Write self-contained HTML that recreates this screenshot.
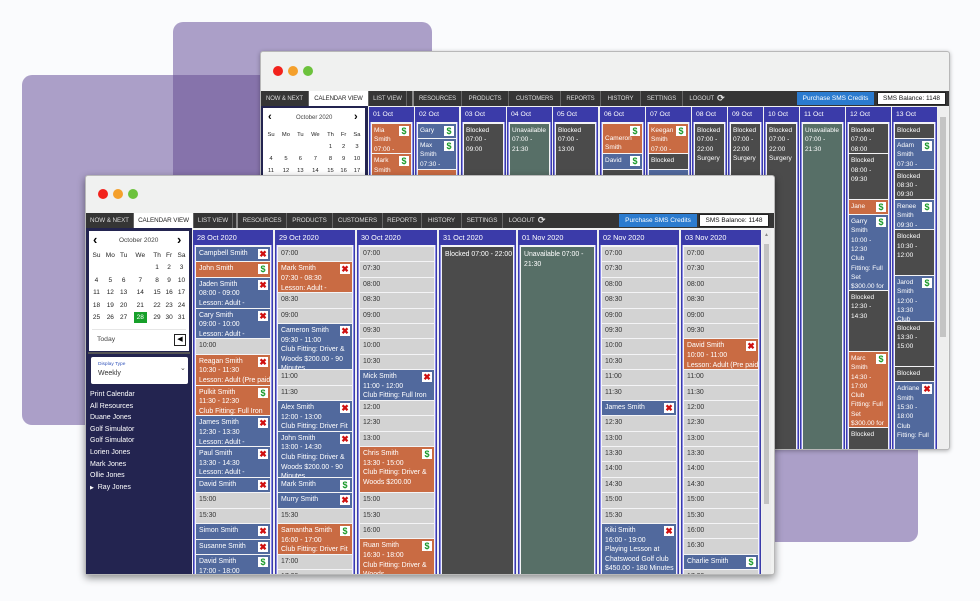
<!DOCTYPE html>
<html><head><meta charset="utf-8">
<style>
*{box-sizing:border-box;margin:0;padding:0}
body{width:980px;height:601px;overflow:hidden;background:#fafbfd;position:relative;font-family:"Liberation Sans",Arial,sans-serif}
.a{position:absolute}
.pr{position:absolute;background:#ab9fc8;border-radius:10px}
.win{position:absolute;background:#f0f1f0;border:1px solid #b8b8b8;border-radius:3px;overflow:hidden}
.dot{position:absolute;width:10px;height:10px;border-radius:50%}
.nav{position:absolute;background:#353535;display:flex;align-items:center;font-size:6px;color:#ddd;letter-spacing:-0.1px}
.nav span{height:100%;display:flex;align-items:center;justify-content:center;border-right:1px solid #666;flex-shrink:0}
.nav .on{background:#fff;color:#222}
.buy{position:absolute;background:#2b7bcf;color:#fff;font-size:6.5px;display:flex;align-items:center;justify-content:center}
.bal{position:absolute;background:#fff;color:#111;font-size:6.5px;display:flex;align-items:center;justify-content:center;border:1px solid #222}
.col{position:absolute;background:#3b3ba9}
.col .hd{position:absolute;left:0;top:0;height:15px;color:#fff;font-size:7.3px;line-height:15px;padding-left:4px;white-space:nowrap}
.col .bd{position:absolute;left:1px;right:1px;top:15px;bottom:0;border-left:1px solid #8a8ae6;border-right:1px solid #8a8ae6;background:#f4f4f6;padding:2px 1px;display:flex;flex-direction:column;gap:1px;overflow:hidden}
.e{position:relative;flex-shrink:0;color:#fff;font-size:6.9px;line-height:9.6px;padding:2px 3px;overflow:hidden;white-space:nowrap}
.b{background:#51699d}.o{background:#c96b43}.g{background:#d3d3d3;color:#333;line-height:10.4px}.k{background:#4b4b4b}.n{background:#576f67}
.i{position:absolute;right:2px;top:2px;width:10px;height:10px;background:#fff;font-weight:bold;font-size:9px;line-height:10px;text-align:center}
.x{color:#d01010}.s{color:#1a9a2a}
.h1{height:14.4px}.h2{height:29.8px}.h3{height:45.2px}.h4{height:60.6px}.h5{height:76px}
.bk .e{font-size:6.5px;line-height:9.3px;padding:2px 2px;white-space:normal}
.bk .h1{height:14.2px}.bk .h2{height:29.4px}.bk .h3{height:44.6px}.bk .h4{height:59.8px}.bk .h5{height:75px}
.bk .hd{font-size:6.8px}
table{border-collapse:collapse}
td{text-align:center;padding:0;color:#222}
</style></head><body>

<div class="pr" style="left:173px;top:22px;width:259px;height:320px"></div>
<div class="pr" style="left:22px;top:75px;width:400px;height:350px"></div>
<div class="a" style="left:173px;top:75px;width:249px;height:267px;background:#8673ab"></div>
<div class="pr" style="left:600px;top:300px;width:318px;height:242px"></div>

<!-- BACK WINDOW -->
<div class="win" style="left:260px;top:51px;width:690px;height:399px;box-shadow:0 1px 4px rgba(0,0,0,.3)"></div>
<div class="dot" style="left:273px;top:66px;background:#f2221c"></div>
<div class="dot" style="left:288px;top:66px;background:#f4a02c"></div>
<div class="dot" style="left:303px;top:66px;background:#6cc23c"></div>
<div class="nav" style="left:261px;top:91px;width:688px;height:15px">
<span style="width:48px">NOW &amp; NEXT</span><span class="on" style="width:60px">CALENDAR VIEW</span><span style="width:38px">LIST VIEW</span><span style="width:7px;border-right:2px solid #888"></span><span style="width:48px">RESOURCES</span><span style="width:47px">PRODUCTS</span><span style="width:52px">CUSTOMERS</span><span style="width:40px">REPORTS</span><span style="width:40px">HISTORY</span><span style="width:42px">SETTINGS</span><span style="width:48px;border:none">LOGOUT &nbsp;<b style="font-size:9px">⟳</b></span>
</div>
<div class="buy" style="left:797px;top:92px;width:77px;height:13px">Purchase SMS Credits</div>
<div class="bal" style="left:877px;top:92px;width:69px;height:13px">SMS Balance: 1148</div>
<div class="a" style="left:261px;top:106px;width:107px;height:343px;background:#232450"></div>
<div class="a" style="left:263px;top:108px;width:102px;height:100px;background:#fff"></div>
<div class="a" style="left:268px;top:111px;font-size:11px;font-weight:bold">‹</div>
<div class="a" style="left:354px;top:111px;font-size:11px;font-weight:bold">›</div>
<div class="a" style="left:296px;top:115px;font-size:6px;color:#444">October 2020</div>
<table class="a" style="left:264px;top:129px;width:100px;font-size:5.8px">
<tr style="height:12px;color:#666"><td>Su</td><td>Mo</td><td>Tu</td><td>We</td><td>Th</td><td>Fr</td><td>Sa</td></tr>
<tr style="height:12px"><td></td><td></td><td></td><td></td><td>1</td><td>2</td><td>3</td></tr>
<tr style="height:12px"><td>4</td><td>5</td><td>6</td><td>7</td><td>8</td><td>9</td><td>10</td></tr>
<tr style="height:12px"><td>11</td><td>12</td><td>13</td><td>14</td><td>15</td><td>16</td><td>17</td></tr>
</table>

<div class="bk">
<div class="col" style="left:369px;top:107px;width:45px;height:342px"><div class="hd">01 Oct</div><div class="bd">
<div class="e o h2">Mia<br>Smith<br>07:00 -<div class="i s">$</div></div><div class="e o h2">Mark<br>Smith<div class="i s">$</div></div><div class="e o h2"></div></div></div>
<div class="col" style="left:415px;top:107px;width:44px;height:342px"><div class="hd">02 Oct</div><div class="bd">
<div class="e b h1">Gary<div class="i s">$</div></div><div class="e b h2">Max<br>Smith<br>07:30 -<div class="i s">$</div></div><div class="e o h2"></div></div></div>
<div class="col" style="left:461px;top:107px;width:45px;height:342px"><div class="hd">03 Oct</div><div class="bd">
<div class="e k h4">Blocked<br>07:00 -<br>09:00</div></div></div>
<div class="col" style="left:507px;top:107px;width:45px;height:342px"><div class="hd">04 Oct</div><div class="bd">
<div class="e n" style="height:330px">Unavailable<br>07:00 -<br>21:30</div></div></div>
<div class="col" style="left:553px;top:107px;width:45px;height:342px"><div class="hd">05 Oct</div><div class="bd">
<div class="e k" style="height:180px">Blocked<br>07:00 -<br>13:00</div></div></div>
<div class="col" style="left:600px;top:107px;width:45px;height:342px"><div class="hd">06 Oct</div><div class="bd">
<div class="e o h2" style="padding-top:10px">Cameron<br>Smith<div class="i s">$</div></div><div class="e b h1">David<div class="i s">$</div></div><div class="e k h3"></div></div></div>
<div class="col" style="left:646px;top:107px;width:45px;height:342px"><div class="hd">07 Oct</div><div class="bd">
<div class="e o h2">Keegan<br>Smith<br>07:00 -<div class="i s">$</div></div><div class="e k h1">Blocked</div><div class="e b h3"></div></div></div>
<div class="col" style="left:692px;top:107px;width:35px;height:342px"><div class="hd">08 Oct</div><div class="bd">
<div class="e k" style="height:330px">Blocked<br>07:00 -<br>22:00<br>Surgery</div></div></div>
<div class="col" style="left:728px;top:107px;width:35px;height:342px"><div class="hd">09 Oct</div><div class="bd">
<div class="e k" style="height:330px">Blocked<br>07:00 -<br>22:00<br>Surgery</div></div></div>
<div class="col" style="left:764px;top:107px;width:35px;height:342px"><div class="hd">10 Oct</div><div class="bd">
<div class="e k" style="height:330px">Blocked<br>07:00 -<br>22:00<br>Surgery</div></div></div>
<div class="col" style="left:800px;top:107px;width:45px;height:342px"><div class="hd">11 Oct</div><div class="bd">
<div class="e n" style="height:330px">Unavailable<br>07:00 -<br>21:30</div></div></div>
<div class="col" style="left:846px;top:107px;width:45px;height:342px"><div class="hd">12 Oct</div><div class="bd">
<div class="e k h2">Blocked<br>07:00 -<br>08:00</div><div class="e k h3">Blocked<br>08:00 -<br>09:30</div><div class="e o h1">Jane<div class="i s">$</div></div><div class="e b h5">Garry<br>Smith<br>10:00 -<br>12:30<br>Club<br>Fitting: Full<br>Set<br>$300.00 for<div class="i s">$</div></div><div class="e k h4">Blocked<br>12:30 -<br>14:30</div><div class="e o h5">Marc<br>Smith<br>14:30 -<br>17:00<br>Club<br>Fitting: Full<br>Set<br>$300.00 for<div class="i s">$</div></div><div class="e k h2">Blocked</div></div></div>
<div class="col" style="left:892px;top:107px;width:45px;height:342px"><div class="hd">13 Oct</div><div class="bd">
<div class="e k h1">Blocked</div><div class="e b h2">Adam<br>Smith<br>07:30 -<div class="i s">$</div></div><div class="e k h2">Blocked<br>08:30 -<br>09:30</div><div class="e b h2">Renee<br>Smith<br>09:30 -<div class="i s">$</div></div><div class="e k h3">Blocked<br>10:30 -<br>12:00</div><div class="e b h3">Jarod<br>Smith<br>12:00 -<br>13:30<br>Club<div class="i s">$</div></div><div class="e k h3">Blocked<br>13:30 -<br>15:00</div><div class="e k h1">Blocked</div><div class="e b h5">Adriane<br>Smith<br>15:30 -<br>18:00<br>Club<br>Fitting: Full<div class="i x">✖</div></div></div></div>
</div>
<div class="a" style="left:938px;top:107px;width:10px;height:342px;background:#eee"></div>
<div class="a" style="left:940px;top:117px;width:6px;height:220px;background:#c4c4c4"></div>

<!-- FRONT WINDOW -->
<div class="win" style="left:85px;top:175px;width:690px;height:400px;box-shadow:0 3px 8px rgba(0,0,0,.45)"></div>
<div class="dot" style="left:98px;top:189px;background:#f2221c"></div>
<div class="dot" style="left:113px;top:189px;background:#f4a02c"></div>
<div class="dot" style="left:128px;top:189px;background:#6cc23c"></div>
<div class="nav" style="left:86px;top:213px;width:688px;height:15px;font-size:6.3px">
<span style="width:48px">NOW &amp; NEXT</span><span class="on" style="width:60px">CALENDAR VIEW</span><span style="width:39px">LIST VIEW</span><span style="width:5px;border-right:2px solid #888"></span><span style="width:49px">RESOURCES</span><span style="width:46px">PRODUCTS</span><span style="width:50px">CUSTOMERS</span><span style="width:39px">REPORTS</span><span style="width:40px">HISTORY</span><span style="width:41px">SETTINGS</span><span style="width:48px;border:none">LOGOUT &nbsp;<b style="font-size:9px">⟳</b></span>
</div>
<div class="buy" style="left:619px;top:214px;width:78px;height:13px">Purchase SMS Credits</div>
<div class="bal" style="left:699px;top:214px;width:70px;height:13px">SMS Balance: 1148</div>

<div class="a" style="left:86px;top:228px;width:106px;height:346px;background:#232450"></div>
<div class="a" style="left:89px;top:231px;width:100px;height:120px;background:#fff"></div>
<div class="a" style="left:93px;top:232px;font-size:13px;font-weight:bold">‹</div>
<div class="a" style="left:177px;top:232px;font-size:13px;font-weight:bold">›</div>
<div class="a" style="left:119px;top:237px;font-size:6.5px;color:#444">October 2020</div>
<table class="a" style="left:90px;top:249px;width:98px;font-size:6.5px">
<tr style="height:12.5px;color:#666"><td>Su</td><td>Mo</td><td>Tu</td><td>We</td><td>Th</td><td>Fr</td><td>Sa</td></tr>
<tr style="height:12.5px"><td></td><td></td><td></td><td></td><td>1</td><td>2</td><td>3</td></tr>
<tr style="height:12.5px"><td>4</td><td>5</td><td>6</td><td>7</td><td>8</td><td>9</td><td>10</td></tr>
<tr style="height:12.5px"><td>11</td><td>12</td><td>13</td><td>14</td><td>15</td><td>16</td><td>17</td></tr>
<tr style="height:12.5px"><td>18</td><td>19</td><td>20</td><td>21</td><td>22</td><td>23</td><td>24</td></tr>
<tr style="height:12.5px"><td>25</td><td>26</td><td>27</td><td><span style="display:inline-block;width:13px;height:11px;line-height:11px;background:#17a02a;color:#fff">28</span></td><td>29</td><td>30</td><td>31</td></tr>
</table>
<div class="a" style="left:92px;top:329px;width:94px;height:1px;background:#e6e6e6"></div>
<div class="a" style="left:97px;top:336px;font-size:6.8px;color:#444">Today</div>
<div class="a" style="left:174px;top:334px;width:12px;height:12px;border:1px solid #222;font-size:7px;line-height:10px;text-align:center">◀</div>
<div class="a" style="left:88px;top:352px;width:102px;height:2px;background:#555"></div>
<div class="a" style="left:91px;top:357px;width:97px;height:27px;background:#fff;border-radius:2px"></div>
<div class="a" style="left:98px;top:362px;font-size:4.8px;color:#3355bb">Display Type</div>
<div class="a" style="left:98px;top:370px;font-size:7px;color:#333">Weekly</div>
<div class="a" style="left:180px;top:364px;font-size:7px;color:#444">⌄</div>
<div class="a" style="left:90px;top:389px;font-size:7px;line-height:11.6px;color:#fff">Print Calendar<br>All Resources<br>Duane Jones<br>Golf Simulator<br>Golf Simulator<br>Lorien Jones<br>Mark Jones<br>Ollie Jones<br><span style="font-size:5px">▶</span>&nbsp;&nbsp;Ray Jones</div>

<div class="col" style="left:193px;top:230px;width:80px;height:344px"><div class="hd">28 Oct 2020</div><div class="bd">
<div class="e b h1">Campbell Smith<div class="i x">✖</div></div>
<div class="e o h1">John Smith<div class="i s">$</div></div>
<div class="e b h2">Jaden Smith<br>08:00 - 09:00<br>Lesson: Adult -<div class="i x">✖</div></div>
<div class="e b h2">Cary Smith<br>09:00 - 10:00<br>Lesson: Adult -<div class="i x">✖</div></div>
<div class="e g h1">10:00</div>
<div class="e o h2">Reagan Smith<br>10:30 - 11:30<br>Lesson: Adult (Pre paid<div class="i x">✖</div></div>
<div class="e o h2">Pulkit Smith<br>11:30 - 12:30<br>Club Fitting: Full Iron<div class="i s">$</div></div>
<div class="e b h2">James Smith<br>12:30 - 13:30<br>Lesson: Adult -<div class="i x">✖</div></div>
<div class="e b h2">Paul Smith<br>13:30 - 14:30<br>Lesson: Adult -<div class="i x">✖</div></div>
<div class="e b h1">David Smith<div class="i x">✖</div></div>
<div class="e g h1">15:00</div><div class="e g h1">15:30</div>
<div class="e b h1">Simon Smith<div class="i x">✖</div></div>
<div class="e b h1">Susanne Smith<div class="i x">✖</div></div>
<div class="e b h2">David Smith<br>17:00 - 18:00<div class="i s">$</div></div>
</div></div>

<div class="col" style="left:275px;top:230px;width:80px;height:344px"><div class="hd">29 Oct 2020</div><div class="bd">
<div class="e g h1">07:00</div>
<div class="e o h2">Mark Smith<br>07:30 - 08:30<br>Lesson: Adult -<div class="i x">✖</div></div>
<div class="e g h1">08:30</div><div class="e g h1">09:00</div>
<div class="e b h3">Cameron Smith<br>09:30 - 11:00<br>Club Fitting: Driver &amp;<br>Woods $200.00 - 90<br>Minutes<div class="i x">✖</div></div>
<div class="e g h1">11:00</div><div class="e g h1">11:30</div>
<div class="e b h2">Alex Smith<br>12:00 - 13:00<br>Club Fitting: Driver Fit<div class="i x">✖</div></div>
<div class="e b h3">John Smith<br>13:00 - 14:30<br>Club Fitting: Driver &amp;<br>Woods $200.00 - 90<br>Minutes<div class="i x">✖</div></div>
<div class="e b h1">Mark Smith<div class="i s">$</div></div>
<div class="e b h1">Murry Smith<div class="i x">✖</div></div>
<div class="e g h1">15:30</div>
<div class="e o h2">Samantha Smith<br>16:00 - 17:00<br>Club Fitting: Driver Fit<div class="i s">$</div></div>
<div class="e g h1">17:00</div><div class="e g h1">17:30</div>
</div></div>

<div class="col" style="left:357px;top:230px;width:80px;height:344px"><div class="hd">30 Oct 2020</div><div class="bd">
<div class="e g h1">07:00</div><div class="e g h1">07:30</div><div class="e g h1">08:00</div><div class="e g h1">08:30</div><div class="e g h1">09:00</div><div class="e g h1">09:30</div><div class="e g h1">10:00</div><div class="e g h1">10:30</div>
<div class="e b h2">Mick Smith<br>11:00 - 12:00<br>Club Fitting: Full Iron<div class="i x">✖</div></div>
<div class="e g h1">12:00</div><div class="e g h1">12:30</div><div class="e g h1">13:00</div>
<div class="e o h3">Chris Smith<br>13:30 - 15:00<br>Club Fitting: Driver &amp;<br>Woods $200.00<div class="i s">$</div></div>
<div class="e g h1">15:00</div><div class="e g h1">15:30</div><div class="e g h1">16:00</div>
<div class="e o h3">Ruan Smith<br>16:30 - 18:00<br>Club Fitting: Driver &amp;<br>Woods<div class="i s">$</div></div>
</div></div>

<div class="col" style="left:439px;top:230px;width:77px;height:344px"><div class="hd">31 Oct 2020</div><div class="bd">
<div class="e k" style="height:340px;padding-top:3px">Blocked 07:00 - 22:00</div></div></div>

<div class="col" style="left:518px;top:230px;width:79px;height:344px"><div class="hd">01 Nov 2020</div><div class="bd">
<div class="e n" style="height:340px;padding-top:3px">Unavailable 07:00 -<br>21:30</div></div></div>

<div class="col" style="left:599px;top:230px;width:80px;height:344px"><div class="hd">02 Nov 2020</div><div class="bd">
<div class="e g h1">07:00</div><div class="e g h1">07:30</div><div class="e g h1">08:00</div><div class="e g h1">08:30</div><div class="e g h1">09:00</div><div class="e g h1">09:30</div><div class="e g h1">10:00</div><div class="e g h1">10:30</div><div class="e g h1">11:00</div><div class="e g h1">11:30</div>
<div class="e b h1">James Smith<div class="i x">✖</div></div>
<div class="e g h1">12:30</div><div class="e g h1">13:00</div><div class="e g h1">13:30</div><div class="e g h1">14:00</div><div class="e g h1">14:30</div><div class="e g h1">15:00</div><div class="e g h1">15:30</div>
<div class="e b h5">Kiki Smith<br>16:00 - 19:00<br>Playing Lesson at<br>Chatswood Golf club<br>$450.00 - 180 Minutes<div class="i x">✖</div></div>
</div></div>

<div class="col" style="left:681px;top:230px;width:80px;height:344px"><div class="hd">03 Nov 2020</div><div class="bd">
<div class="e g h1">07:00</div><div class="e g h1">07:30</div><div class="e g h1">08:00</div><div class="e g h1">08:30</div><div class="e g h1">09:00</div><div class="e g h1">09:30</div>
<div class="e o h2">David Smith<br>10:00 - 11:00<br>Lesson: Adult (Pre paid<div class="i x">✖</div></div>
<div class="e g h1">11:00</div><div class="e g h1">11:30</div><div class="e g h1">12:00</div><div class="e g h1">12:30</div><div class="e g h1">13:00</div><div class="e g h1">13:30</div><div class="e g h1">14:00</div><div class="e g h1">14:30</div><div class="e g h1">15:00</div><div class="e g h1">15:30</div><div class="e g h1">16:00</div><div class="e g h1">16:30</div>
<div class="e b h1">Charlie Smith<div class="i s">$</div></div>
<div class="e g h1">17:30</div>
</div></div>

<div class="a" style="left:762px;top:230px;width:9px;height:344px;background:#ececec"></div>
<div class="a" style="left:763px;top:232px;width:7px;height:6px;font-size:5px;color:#888;text-align:center">▲</div>
<div class="a" style="left:764px;top:244px;width:5px;height:260px;background:#c2c2c2"></div>
</body></html>
